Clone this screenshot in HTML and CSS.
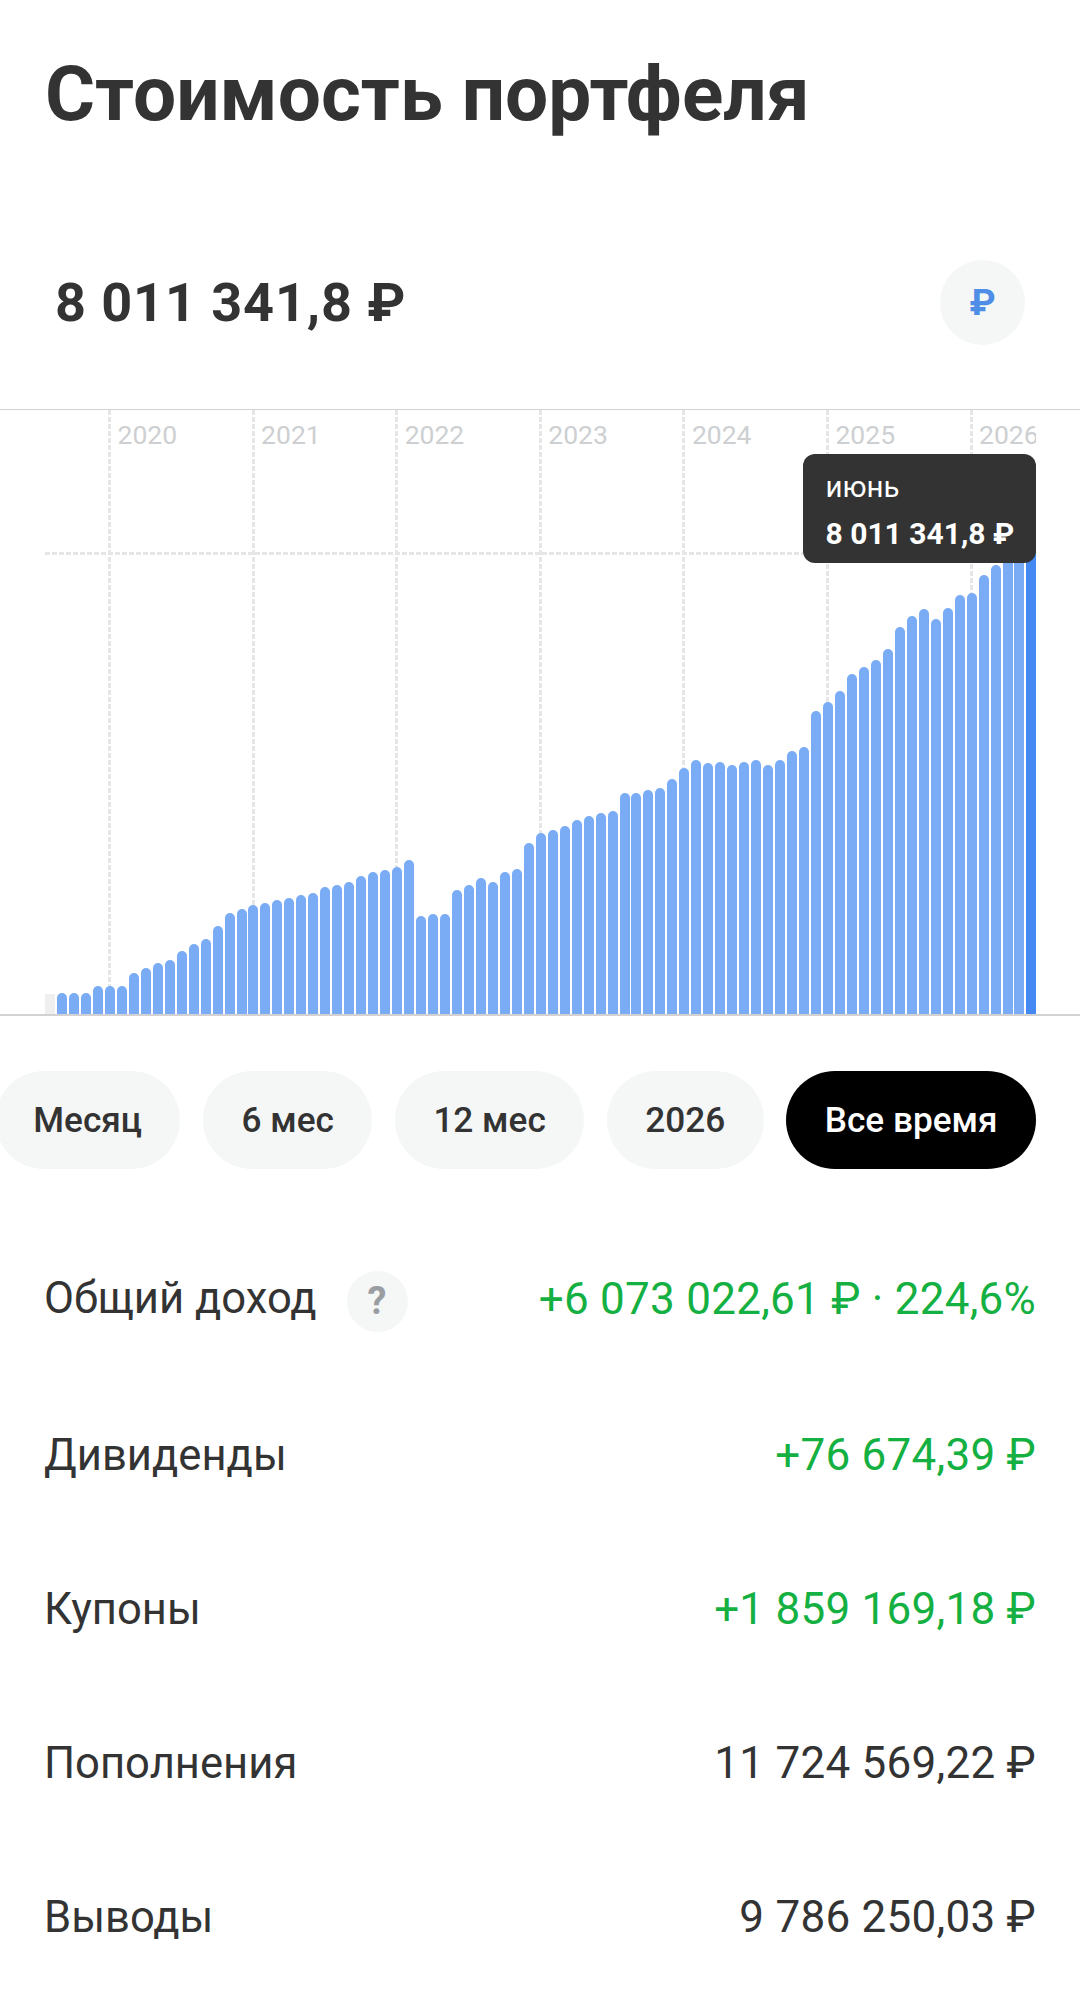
FILE: index.html
```html
<!DOCTYPE html>
<html lang="ru">
<head>
<meta charset="utf-8">
<title>Стоимость портфеля</title>
<link rel="stylesheet" href="styles.css">
</head>
<body>
<main class="page">
  <h1 class="title">Стоимость портфеля</h1>
  <section class="summary">
    <div class="total">8 011 341,8 ₽</div>
    <button class="currency">₽</button>
  </section>
  <section class="chart">
    <div class="years">
      <div class="year"><span>2020</span></div>
      <div class="year"><span>2021</span></div>
      <div class="year"><span>2022</span></div>
      <div class="year"><span>2023</span></div>
      <div class="year"><span>2024</span></div>
      <div class="year"><span>2025</span></div>
      <div class="year"><span>2026</span></div>
    </div>
    <div class="level"></div>
    <div class="bars">
      <i class="bar empty" style="height:20px"></i>
      <i class="bar" style="height:21px"></i><i class="bar" style="height:21px"></i><i class="bar" style="height:21px"></i><i class="bar" style="height:27.7px"></i><i class="bar" style="height:27.7px"></i><i class="bar" style="height:27.7px"></i><i class="bar" style="height:40.7px"></i><i class="bar" style="height:45.7px"></i><i class="bar" style="height:51px"></i><i class="bar" style="height:54.3px"></i>
      <i class="bar" style="height:63px"></i><i class="bar" style="height:70.3px"></i><i class="bar" style="height:75.3px"></i><i class="bar" style="height:88px"></i><i class="bar" style="height:101px"></i><i class="bar" style="height:104.7px"></i><i class="bar" style="height:109.3px"></i><i class="bar" style="height:111px"></i><i class="bar" style="height:114px"></i><i class="bar" style="height:116.3px"></i>
      <i class="bar" style="height:118.7px"></i><i class="bar" style="height:121px"></i><i class="bar" style="height:127.3px"></i><i class="bar" style="height:129px"></i><i class="bar" style="height:131.7px"></i><i class="bar" style="height:138px"></i><i class="bar" style="height:141.7px"></i><i class="bar" style="height:144.3px"></i><i class="bar" style="height:146.7px"></i><i class="bar" style="height:153.7px"></i>
      <i class="bar" style="height:97.7px"></i><i class="bar" style="height:100px"></i><i class="bar" style="height:100px"></i><i class="bar" style="height:123.7px"></i><i class="bar" style="height:128.7px"></i><i class="bar" style="height:135.7px"></i><i class="bar" style="height:131.7px"></i><i class="bar" style="height:141.7px"></i><i class="bar" style="height:145px"></i><i class="bar" style="height:171.3px"></i>
      <i class="bar" style="height:180.7px"></i><i class="bar" style="height:183.7px"></i><i class="bar" style="height:188px"></i><i class="bar" style="height:194px"></i><i class="bar" style="height:198px"></i><i class="bar" style="height:201px"></i><i class="bar" style="height:202.7px"></i><i class="bar" style="height:221px"></i><i class="bar" style="height:221px"></i><i class="bar" style="height:223.7px"></i>
      <i class="bar" style="height:226px"></i><i class="bar" style="height:235.3px"></i><i class="bar" style="height:245.7px"></i><i class="bar" style="height:254.3px"></i><i class="bar" style="height:251px"></i><i class="bar" style="height:252px"></i><i class="bar" style="height:249px"></i><i class="bar" style="height:252px"></i><i class="bar" style="height:254.3px"></i><i class="bar" style="height:249px"></i>
      <i class="bar" style="height:253.7px"></i><i class="bar" style="height:263px"></i><i class="bar" style="height:267.3px"></i><i class="bar" style="height:302.7px"></i><i class="bar" style="height:311.7px"></i><i class="bar" style="height:322.7px"></i><i class="bar" style="height:340.3px"></i><i class="bar" style="height:347.3px"></i><i class="bar" style="height:354px"></i><i class="bar" style="height:365.3px"></i>
      <i class="bar" style="height:387px"></i><i class="bar" style="height:397.7px"></i><i class="bar" style="height:405px"></i><i class="bar" style="height:395px"></i><i class="bar" style="height:405.7px"></i><i class="bar" style="height:419px"></i><i class="bar" style="height:421px"></i><i class="bar" style="height:439px"></i><i class="bar" style="height:449px"></i><i class="bar" style="height:456px"></i>
      <i class="bar" style="height:459px"></i><i class="bar current" style="height:463px"></i>
    </div>
    <div class="tooltip">
      <div class="tooltip-month">июнь</div>
      <div class="tooltip-value">8 011 341,8 ₽</div>
    </div>
  </section>
  <nav class="periods">
    <button class="pill">Месяц</button>
    <button class="pill">6 мес</button>
    <button class="pill">12 мес</button>
    <button class="pill">2026</button>
    <button class="pill active">Все время</button>
  </nav>
  <section class="stats">
    <div class="row first">
      <div class="label-wrap"><span class="label">Общий доход</span><span class="help">?</span></div>
      <span class="value gain">+6 073 022,61 ₽ · 224,6%</span>
    </div>
    <div class="row"><span class="label">Дивиденды</span><span class="value gain">+76 674,39 ₽</span></div>
    <div class="row"><span class="label">Купоны</span><span class="value gain">+1 859 169,18 ₽</span></div>
    <div class="row"><span class="label">Пополнения</span><span class="value">11 724 569,22 ₽</span></div>
    <div class="row"><span class="label">Выводы</span><span class="value">9 786 250,03 ₽</span></div>
  </section>
</main>
</body>
</html>
```

FILE: styles.css
```css
* { box-sizing: border-box; }
html, body { margin: 0; padding: 0; background: #fff; }
body { font-family: Roboto, "Noto Sans", sans-serif; color: #333; }
.page { width: 1080px; height: 1998px; overflow: hidden; }

.title {
  margin: 0;
  padding: 50px 0 0 45px;
  height: 188px;
  font-size: 76.6px;
  line-height: 88px;
  font-weight: 700;
  color: #333;
}

.summary {
  display: flex;
  align-items: center;
  justify-content: space-between;
  height: 221px;
  padding: 8px 55px 0 55px;
}
.total { font-size: 54px; font-weight: 700; letter-spacing: 0.9px; }
.currency {
  width: 85px;
  height: 85px;
  border: 0;
  border-radius: 50%;
  background: #f5f7f7;
  color: #4f8de6;
  font: 700 37px Roboto, sans-serif;
  padding: 0;
}

.chart {
  position: relative;
  height: 607px;
  border-top: 1px solid #d2d2d2;
  border-bottom: 2px solid #d2d2d2;
}
.years {
  position: absolute;
  left: 108px;
  top: 0;
  bottom: 0;
  right: 44px;
  display: flex;
  overflow: hidden;
}
.year {
  flex: 0 0 143.6px;
  padding-left: 9.5px;
  font-size: 26.5px;
  line-height: 50px;
  color: #cdcfd1;
  background-image: repeating-linear-gradient(to bottom, #e6e6e6 0 5px, transparent 5px 7px);
  background-size: 3px 100%;
  background-repeat: no-repeat;
}
.level {
  position: absolute;
  left: 45px;
  right: 44px;
  top: 142px;
  height: 3px;
  background-image: repeating-linear-gradient(to right, #e6e6e6 0 5px, transparent 5px 7px);
}
.bars {
  position: absolute;
  left: 45px;
  right: 0;
  bottom: 0;
  display: flex;
  align-items: flex-end;
  gap: 1.97px;
}
.bar {
  flex: 0 0 10px;
  display: block;
  background: #7aacf6;
  border-radius: 5px 5px 0 0;
}
.bar.empty { background: #efefef; border-radius: 0; }
.bar.current { background: #4488f2; border-radius: 0; }

.tooltip {
  position: absolute;
  right: 44px;
  top: 44px;
  width: 233px;
  height: 109px;
  padding: 15px 0 0 22.5px;
  border-radius: 12px;
  background: #333;
  color: #fff;
}
.tooltip-month { font-size: 29.5px; line-height: 36px; }
.tooltip-value { font-size: 30px; line-height: 36px; margin-top: 11px; font-weight: 700; }

.periods {
  display: flex;
  justify-content: flex-end;
  gap: 22.5px;
  height: 98px;
  margin-top: 55px;
  padding-right: 44px;
}
.pill {
  flex: none;
  height: 98px;
  padding: 0 38.5px;
  border: 0;
  border-radius: 49px;
  background: #f5f7f7;
  color: #333;
  font: 500 35.2px Roboto, sans-serif;
}
.pill.active { background: #000; color: #fff; }

.stats { margin-top: 50px; padding: 0 44px 0 44px; }
.row {
  display: flex;
  align-items: center;
  justify-content: space-between;
  height: 154px;
  font-size: 43.6px;
}
.row.first { height: 159px; }
.label-wrap { display: flex; align-items: center; gap: 30px; }
.label { color: #333; }
.value { color: #333; font-size: 44px; letter-spacing: 0.25px; }
.value.gain { color: #14b042; }
.help {
  width: 61px;
  height: 61px;
  border-radius: 50%;
  background: #f5f6f6;
  color: #9a9da1;
  font-size: 38px;
  font-weight: 700;
  display: flex;
  align-items: center;
  justify-content: center;
  margin-top: 5px;
}
```
